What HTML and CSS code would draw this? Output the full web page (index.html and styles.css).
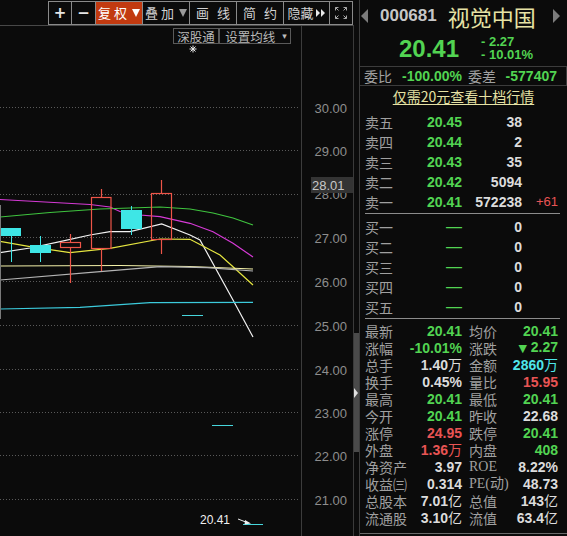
FILE: index.html
```html
<!DOCTYPE html>
<html lang="zh">
<head>
<meta charset="utf-8">
<title>视觉中国 000681</title>
<link rel="stylesheet" href="styles.css">
</head>
<body>
<div class="app">
  <div class="left">
    <div class="toolbar">
      <div class="btn sq sym">+</div>
      <div class="btn sq2 sym">−</div>
      <div class="btn wide active"><span class="lbl">复权</span><svg class="dn" width="8" height="8" viewBox="0 0 8 8"><polygon points="0,0 8,0 4,8" fill="#fff"/></svg></div>
      <div class="btn wide"><span class="lbl">叠加</span><svg class="dn" width="8" height="8" viewBox="0 0 8 8"><polygon points="0,0 8,0 4,8" fill="#9a9a9a"/></svg></div>
      <div class="btn wide"><span class="lbl wider">画线</span></div>
      <div class="btn wide"><span class="lbl wider">简约</span></div>
      <div class="btn wide2"><span class="lbl tight">隐藏</span><svg class="ff" width="10" height="8" viewBox="0 0 10 8"><polygon points="0,0 4,4 0,8" fill="#e8e8e8"/><polygon points="5,0 9,4 5,8" fill="#e8e8e8"/></svg></div>
      <div class="btn sq2 last"><svg width="14" height="14" viewBox="0 0 14 14" fill="none" stroke="#a8a8a8" stroke-width="1"><path d="M1.5 4.5V1.5H4.5M1.5 1.5L4.5 4.5"/><path d="M9.5 1.5H12.5V4.5M12.5 1.5L9.5 4.5"/><path d="M1.5 9.5V12.5H4.5M1.5 12.5L4.5 9.5"/><path d="M12.5 9.5V12.5H9.5M12.5 12.5L9.5 9.5"/></svg></div>
    </div>
    <div class="chart">
      <svg class="plot" width="353" height="510" viewBox="0 26 353 510">
        <g stroke="#5a5a5a" stroke-width="1" stroke-dasharray="1 2">
          <line x1="0" y1="107.5" x2="299" y2="107.5"/>
          <line x1="0" y1="150.5" x2="299" y2="150.5"/>
          <line x1="0" y1="194.5" x2="299" y2="194.5"/>
          <line x1="0" y1="237.5" x2="299" y2="237.5"/>
          <line x1="0" y1="281.5" x2="299" y2="281.5"/>
          <line x1="0" y1="325.5" x2="299" y2="325.5"/>
          <line x1="0" y1="369.5" x2="299" y2="369.5"/>
          <line x1="0" y1="412.5" x2="299" y2="412.5"/>
          <line x1="0" y1="455.5" x2="299" y2="455.5"/>
          <line x1="0" y1="499.5" x2="299" y2="499.5"/>
        </g>
        <line x1="301.5" y1="26" x2="301.5" y2="536" stroke="#3c3c3c"/>
        <g class="axis" font-family="Liberation Sans, Arial, sans-serif" font-size="13" fill="#8e8e8e" text-anchor="end">
          <text x="347" y="112.5">30.00</text>
          <text x="347" y="155.5">29.00</text>
          <text x="347" y="198.5">28.00</text>
          <text x="347" y="242.5">27.00</text>
          <text x="347" y="286.5">26.00</text>
          <text x="347" y="330.5">25.00</text>
          <text x="347" y="374.5">24.00</text>
          <text x="347" y="417.5">23.00</text>
          <text x="347" y="460.5">22.00</text>
          <text x="347" y="504.5">21.00</text>
        </g>
        <rect x="311" y="177" width="42" height="16" fill="#343434"/>
        <text x="312" y="190" font-family="Liberation Sans, Arial, sans-serif" font-size="13" fill="#c8c8c8">28.01</text>

        <!-- star marker -->
        <g stroke="#e8e8e8" stroke-width="1">
          <line x1="189.5" y1="49" x2="196.5" y2="49"/>
          <line x1="193" y1="45.5" x2="193" y2="52.5"/>
          <line x1="190.5" y1="46.5" x2="195.5" y2="51.5"/>
          <line x1="195.5" y1="46.5" x2="190.5" y2="51.5"/>
        </g>

        <!-- moving averages -->
        <g fill="none" stroke-width="1.2">
          <polyline stroke="#d63ad6" points="0,199.5 90,204.5 110,207 120,211.5 140,215 160,216.7 190,223.3 213,231.7 233,243.3 253,257"/>
          <polyline stroke="#3fc43f" points="0,217 50,212.5 100,209 160,207 190,209 213,213 233,218 253,225"/>
          <polyline stroke="#f2f2f2" points="0,252.7 30,248 60,241.7 90,235 110,231.7 130,231.7 161.7,224 190,235 200,240 233,300 253,337"/>
          <polyline stroke="#e6e640" points="0,241.3 30,246.7 70,252.7 110,248.3 160,239 190,239.3 220,255 233,266.7 253,285"/>
          <polyline stroke="#f3f0a8" points="0,266 120,265.5 190,266.5 253,269"/>
          <polyline stroke="#b4b4b4" points="0,280 100,271.7 160,266.7 207,267.7 253,271"/>
          <polyline stroke="#3ccbdc" points="0,309 80,307.3 150,302.7 253,302.3"/>
        </g>

        <!-- candles -->
        <line x1="0.5" y1="205" x2="0.5" y2="319" stroke="#7a7a7a"/>
        <g stroke="#3ee6e6" stroke-width="1">
          <line x1="11.5" y1="236" x2="11.5" y2="262"/>
          <line x1="40.5" y1="236" x2="40.5" y2="262"/>
          <line x1="131.5" y1="206" x2="131.5" y2="235"/>
        </g>
        <g fill="#3ee6e6">
          <rect x="1" y="228" width="20" height="8"/>
          <rect x="30" y="245" width="21" height="8"/>
          <rect x="121" y="210" width="21" height="19"/>
        </g>
        <g stroke="#ee5548" stroke-width="1.2" fill="none">
          <line x1="70.5" y1="234" x2="70.5" y2="242.5"/>
          <line x1="70.5" y1="247.5" x2="70.5" y2="283"/>
          <rect x="60.5" y="242.5" width="20" height="5"/>
          <line x1="101.5" y1="189" x2="101.5" y2="197.5"/>
          <line x1="101.5" y1="248.5" x2="101.5" y2="271"/>
          <rect x="91.5" y="197.5" width="19.5" height="51"/>
          <line x1="161.5" y1="180" x2="161.5" y2="193.5"/>
          <line x1="161.5" y1="239.5" x2="161.5" y2="254"/>
          <rect x="151.5" y="193.5" width="20" height="46"/>
        </g>
        <g stroke="#46d6dc" stroke-width="1">
          <line x1="182" y1="315.5" x2="203" y2="315.5"/>
          <line x1="212" y1="425.5" x2="233" y2="425.5"/>
          <line x1="243" y1="524.5" x2="263" y2="524.5"/>
        </g>
        <text x="200" y="524" font-family="Liberation Sans, Arial, sans-serif" font-size="12" fill="#f0f0f0">20.41</text>
        <line x1="238" y1="519" x2="247" y2="522.5" stroke="#f0f0f0" stroke-width="1"/>
        <polygon points="245,520 251,523.6 244.5,524.5" fill="#f0f0f0"/>
      </svg>
      <div class="chip chip-sgt">深股通</div>
      <div class="chip chip-ma">设置均线<span class="caret">▾</span></div>
    </div>
  </div>

  <div class="scroll"><div class="thumb"><span class="thumb-arrow"></span></div></div>

  <div class="panel">
    <div class="head">
      <span class="arr arr-l"></span>
      <span class="code">000681</span>
      <span class="name">视觉中国</span>
      <span class="arr arr-r"></span>
    </div>
    <div class="quote">
      <span class="last-price">20.41</span>
      <div class="chg">
        <span>- 2.27</span>
        <span>- 10.01%</span>
      </div>
    </div>
    <div class="ratio">
      <div class="half h1"><span class="lab">委比</span><span class="val g">-100.00%</span></div>
      <div class="half h2"><span class="lab">委差</span><span class="val g">-577407</span></div>
    </div>
    <div class="promo"><span>仅需20元查看十档行情</span></div>

    <div class="book sell">
      <div class="lv"><span class="lab">卖五</span><span class="p g">20.45</span><span class="v">38</span><span class="x"></span></div>
      <div class="lv"><span class="lab">卖四</span><span class="p g">20.44</span><span class="v">2</span><span class="x"></span></div>
      <div class="lv"><span class="lab">卖三</span><span class="p g">20.43</span><span class="v">35</span><span class="x"></span></div>
      <div class="lv"><span class="lab">卖二</span><span class="p g">20.42</span><span class="v">5094</span><span class="x"></span></div>
      <div class="lv"><span class="lab">卖一</span><span class="p g">20.41</span><span class="v">572238</span><span class="x r">+61</span></div>
    </div>
    <div class="book buy">
      <div class="lv"><span class="lab">买一</span><span class="p g dash">—</span><span class="v">0</span><span class="x"></span></div>
      <div class="lv"><span class="lab">买二</span><span class="p g dash">—</span><span class="v">0</span><span class="x"></span></div>
      <div class="lv"><span class="lab">买三</span><span class="p g dash">—</span><span class="v">0</span><span class="x"></span></div>
      <div class="lv"><span class="lab">买四</span><span class="p g dash">—</span><span class="v">0</span><span class="x"></span></div>
      <div class="lv"><span class="lab">买五</span><span class="p g dash">—</span><span class="v">0</span><span class="x"></span></div>
    </div>

    <div class="stats">
      <div class="row"><div class="half h1"><span class="lab">最新</span><span class="val g">20.41</span></div><div class="half h2"><span class="lab">均价</span><span class="val g">20.41</span></div></div>
      <div class="row"><div class="half h1"><span class="lab">涨幅</span><span class="val g">-10.01%</span></div><div class="half h2"><span class="lab">涨跌</span><span class="val g"><span class="tri-dn">▼</span> 2.27</span></div></div>
      <div class="row"><div class="half h1"><span class="lab">总手</span><span class="val w">1.40<span class="cj">万</span></span></div><div class="half h2"><span class="lab">金额</span><span class="val c">2860<span class="cj">万</span></span></div></div>
      <div class="row"><div class="half h1"><span class="lab">换手</span><span class="val w">0.45%</span></div><div class="half h2"><span class="lab">量比</span><span class="val r">15.95</span></div></div>
      <div class="row"><div class="half h1"><span class="lab">最高</span><span class="val g">20.41</span></div><div class="half h2"><span class="lab">最低</span><span class="val g">20.41</span></div></div>
      <div class="row"><div class="half h1"><span class="lab">今开</span><span class="val g">20.41</span></div><div class="half h2"><span class="lab">昨收</span><span class="val w">22.68</span></div></div>
      <div class="row"><div class="half h1"><span class="lab">涨停</span><span class="val r">24.95</span></div><div class="half h2"><span class="lab">跌停</span><span class="val g">20.41</span></div></div>
      <div class="row"><div class="half h1"><span class="lab">外盘</span><span class="val r">1.36<span class="cj">万</span></span></div><div class="half h2"><span class="lab">内盘</span><span class="val g">408</span></div></div>
      <div class="row"><div class="half h1"><span class="lab">净资产</span><span class="val w">3.97</span></div><div class="half h2"><span class="lab lat">ROE</span><span class="val w">8.22%</span></div></div>
      <div class="row"><div class="half h1"><span class="lab">收益㈢</span><span class="val w">0.314</span></div><div class="half h2"><span class="lab lat">PE(动)</span><span class="val w">48.73</span></div></div>
      <div class="row"><div class="half h1"><span class="lab">总股本</span><span class="val w">7.01<span class="cj">亿</span></span></div><div class="half h2"><span class="lab">总值</span><span class="val w">143<span class="cj">亿</span></span></div></div>
      <div class="row"><div class="half h1"><span class="lab">流通股</span><span class="val w">3.10<span class="cj">亿</span></span></div><div class="half h2"><span class="lab">流值</span><span class="val w">63.4<span class="cj">亿</span></span></div></div>
    </div>
  </div>
</div>
</body>
</html>
```

FILE: styles.css
```css
* { box-sizing: border-box; margin: 0; padding: 0; }
html, body { background: #0b0b0b; }
body {
  width: 567px;
  height: 536px;
  overflow: hidden;
  font-family: "Liberation Sans", Arial, "Noto Sans CJK SC", sans-serif;
  color: #d8d8d8;
}
.app { display: flex; height: 536px; }

/* ---------- left: chart ---------- */
.left { width: 354px; display: flex; flex-direction: column; }
.toolbar { height: 25px; padding: 1px 0 0 48px; display: flex; }
.btn {
  height: 24px;
  border: 1px solid #8a8a8a;
  border-right: none;
  display: flex;
  align-items: center;
  justify-content: center;
  font-family: "Noto Sans CJK SC", sans-serif;
  font-size: 13px;
  line-height: 14px;
  color: #d2d2d2;
}
.btn.last { border-right: 1px solid #8a8a8a; }
.sq { width: 23px; }
.sq2 { width: 24px; }
.wide { width: 47px; }
.wide2 { width: 46px; }
.sym { font-family: "DejaVu Sans", sans-serif; font-size: 15px; font-weight: bold; color: #e6e6e6; }
.active { background: #c23a10; color: #fff; }
.lbl { letter-spacing: 3px; }
.lbl.wider { letter-spacing: 8px; margin-right: -8px; }
.lbl.tight { letter-spacing: 0; }
.dn { margin-left: 2px; }
.ff { margin-left: 2px; }

.chart {
  flex: 1;
  position: relative;
  border-top: 1px solid #484848;
  border-right: 1px solid #3a3a3a;
}
.plot { display: block; }
.chip {
  position: absolute;
  top: 2px;
  height: 16px;
  border: 1px solid #5a5a5a;
  font-family: "Noto Sans CJK SC", sans-serif;
  font-size: 12.5px;
  line-height: 13px;
  color: #b8b8b8;
  display: flex;
  align-items: center;
  justify-content: center;
}
.chip-sgt { left: 173px; width: 46px; }
.chip-ma { left: 219px; width: 72px; padding-left: 2px; }
.caret { font-family: "DejaVu Sans", sans-serif; font-size: 9px; margin-left: 7px; color: #bbb; }

/* ---------- scrollbar ---------- */
.scroll { width: 5px; padding-top: 333px; }
.thumb { height: 119px; background: #4a4a4a; display: flex; align-items: center; }
.thumb-arrow {
  width: 0; height: 0;
  border-left: 4px solid #e0e0e0;
  border-top: 5px solid transparent;
  border-bottom: 5px solid transparent;
}

/* ---------- right panel ---------- */
.panel {
  width: 208px;
  border-left: 1px solid #3c3c3c;
  display: flex;
  flex-direction: column;
}
.head { height: 32px; display: flex; align-items: center; padding-left: 1px; }
.arr { width: 0; height: 0; border-top: 7px solid transparent; border-bottom: 7px solid transparent; }
.arr-l { border-right: 7px solid #7c7c7c; }
.arr-r { border-left: 7px solid #7c7c7c; margin-left: 17px; }
.code { margin-left: 12px; font-size: 17px; font-weight: bold; color: #c6c6c6; }
.name {
  margin-left: 11px;
  font-family: "Noto Sans CJK SC", sans-serif;
  font-size: 22px;
  line-height: 26px;
  color: #e6e2a4;
}

.quote { height: 34px; display: flex; align-items: flex-start; padding: 5px 0 0 39px; }
.last-price { font-size: 24px; line-height: 24px; font-weight: bold; color: #52d452; }
.chg {
  margin-left: 22px;
  margin-top: -2px;
  display: flex;
  flex-direction: column;
  font-size: 13px;
  line-height: 13px;
  font-weight: bold;
  color: #52d452;
}

.ratio {
  height: 20px;
  display: flex;
  align-items: center;
  border-top: 1px solid #3c3c3c;
  border-bottom: 1px solid #3c3c3c;
  border-right: 1px solid #3c3c3c;
  padding-left: 4px;
}
.half { display: flex; justify-content: space-between; align-items: center; }
.h1 { width: 97px; }
.h2 { width: 89px; margin-left: 7px; }
.ratio .h1 { width: 98px; }
.ratio .h2 { width: 89px; margin-left: 6px; }

.lab {
  font-family: "Noto Sans CJK SC", sans-serif;
  font-size: 14px;
  line-height: 16px;
  color: #a0a0a0;
  white-space: nowrap;
}
.lab.lat { font-family: "Liberation Serif", "Noto Sans CJK SC", serif; font-size: 14px; }
.val, .p, .v { font-size: 14px; line-height: 16px; font-weight: bold; white-space: nowrap; }
.g { color: #52d452; }
.r { color: #e85454; }
.c { color: #4fe6ea; }
.w { color: #dcdcdc; }
.cj { font-family: "Noto Sans CJK SC", sans-serif; font-weight: normal; }
.tri-dn { font-family: "DejaVu Sans", sans-serif; font-size: 11px; }

.promo { height: 20px; display: flex; justify-content: center; align-items: center; }
.promo span {
  font-family: "Noto Sans CJK SC", sans-serif;
  font-size: 14px;
  line-height: 16px;
  color: #e6e2a4;
  text-decoration: underline;
  text-underline-offset: 2px;
}

.book { padding-left: 5px; }
.sell { padding-top: 6px; height: 107px; margin-right: 7px; }
.buy {
  border-top: 1px solid #8c8c8c;
  border-bottom: 1px solid #8c8c8c;
  margin: 0 7px 0 5px;
  padding: 3px 0 1px 0;
  height: 106px;
}
.lv { height: 20px; display: grid; grid-template-columns: 40px 57px 60px 36px; align-items: center; }
.lv .p, .lv .v, .lv .x { text-align: right; }
.lv .v { color: #dcdcdc; }
.lv .x { font-size: 13px; line-height: 16px; }
.dash { font-size: 16px; font-weight: normal; line-height: 16px; }

.stats {
  padding: 3px 0 0 5px;
  height: 215px;
  border-bottom: 1px solid #6a6a6a;
}
.row { height: 17px; display: flex; align-items: center; }
```
